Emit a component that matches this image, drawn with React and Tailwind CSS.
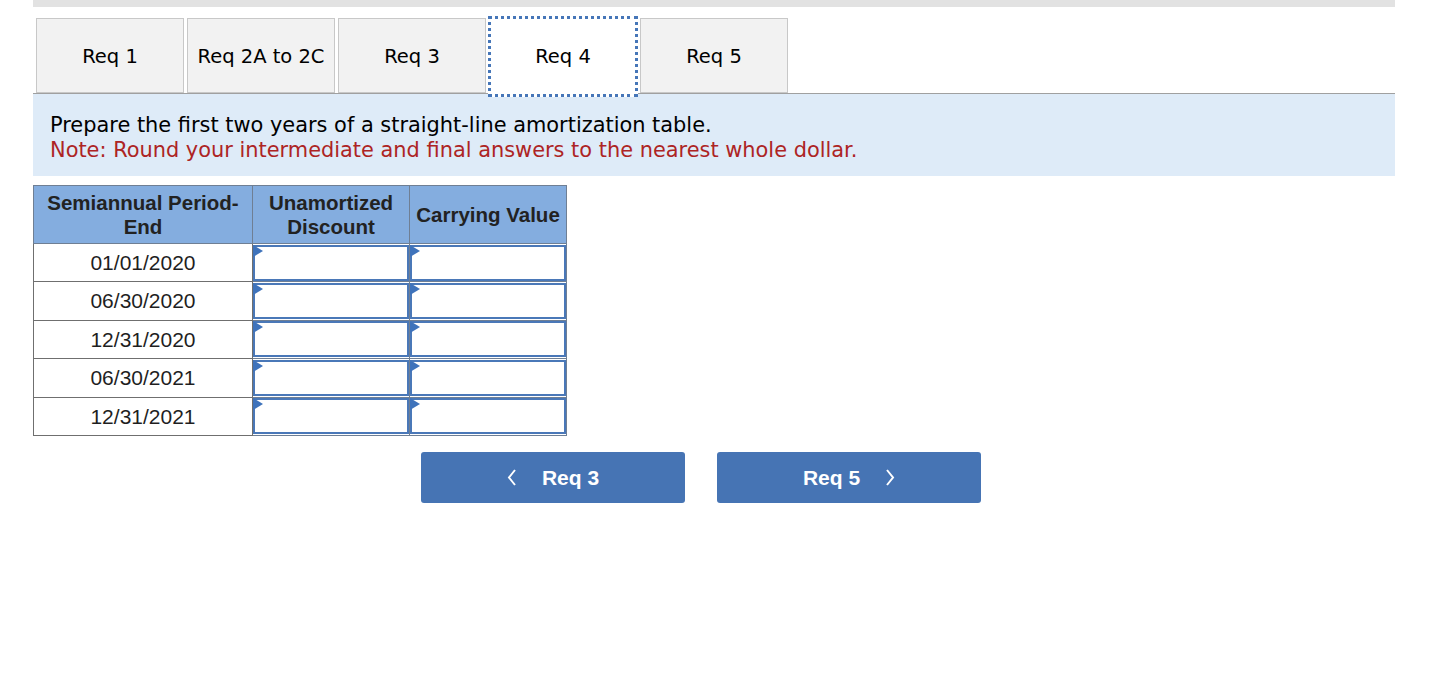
const tabs = ['Req 1', 'Req 2A to 2C', 'Req 3', 'Req 4', 'Req 5'];
const dates = ['01/01/2020', '06/30/2020', '12/31/2020', '06/30/2021', '12/31/2021'];

function InputCell() {
  return (
    <td className="p-0 border border-[#6f7f94] h-[38.4px]">
      <div className="relative h-[36px] border-2 border-[#4a78b8] bg-white">
        <svg className="absolute -left-[2px] -top-[2px]" width="10" height="12" viewBox="0 0 10 12">
          <polygon points="0,0 10,6 0,12" fill="#3f73bb" />
        </svg>
      </div>
    </td>
  );
}

function Chevron({ dir }) {
  return (
    <svg width="10" height="17" viewBox="0 0 10 17" fill="none" stroke="white" strokeWidth="2">
      {dir === 'left' ? <polyline points="8,1 2,8.5 8,16" /> : <polyline points="2,1 8,8.5 2,16" />}
    </svg>
  );
}

export default function App() {
  return (
    <div className="w-[1432px] h-[674px] bg-white overflow-hidden">
      <div className="ml-[33px] w-[1362px]">
        <div className="h-[7px] bg-[#e2e2e2]" />

        {/* tabs */}
        <div className="mt-[11px] flex items-start gap-[3px] pl-[3px] h-[75px] relative z-10 font-['DejaVu_Sans',sans-serif] text-[19.5px] text-black">
          {tabs.map(t => (
            t === 'Req 4' ? (
              <div key={t} className="w-[150px] h-[81px] -mt-[2px] -mx-[1px] border-[3px] border-dotted border-[#4676b8] bg-white flex items-center justify-center">
                <span>{t}</span>
              </div>
            ) : (
              <div key={t} className="w-[148px] h-[75px] pt-[2px] border border-[#c8c8c8] bg-[#f2f2f2] flex items-center justify-center">
                {t}
              </div>
            )
          ))}
        </div>

        {/* instructions */}
        <div className="border-t border-[#a0a0a0] bg-[#deebf8] h-[83px] pl-[17px] pt-[19px] font-['DejaVu_Sans',sans-serif] text-[20.9px] leading-[25px]">
          <div className="text-black">Prepare the first two years of a straight-line amortization table.</div>
          <div className="text-[#ad2424]">Note: Round your intermediate and final answers to the nearest whole dollar.</div>
        </div>

        {/* table */}
        <table className="mt-[9px] border-collapse font-['Liberation_Sans',Arial,sans-serif] text-[21px] text-[#1f1f1f]">
          <thead>
            <tr className="bg-[#84addf] font-bold h-[58px] leading-[24px] text-[20.5px] text-[#222]">
              <th className="w-[219px] border border-[#6f7f94] font-bold">Semiannual Period-<br />End</th>
              <th className="w-[157px] border border-[#6f7f94] font-bold">Unamortized<br />Discount</th>
              <th className="w-[157px] border border-[#6f7f94] font-bold">Carrying Value</th>
            </tr>
          </thead>
          <tbody>
            {dates.map(d => (
              <tr key={d}>
                <td className="border border-[#6f6f6f] text-center h-[38.4px]">{d}</td>
                <InputCell />
                <InputCell />
              </tr>
            ))}
          </tbody>
        </table>

        {/* nav buttons */}
        <div className="mt-[16px] ml-[388px] flex gap-[32px] font-['Liberation_Sans',Arial,sans-serif] font-bold text-[21px] text-white">
          <button className="w-[264px] h-[51px] rounded-[3px] bg-[#4674b4] flex items-center justify-center gap-[25px]">
            <Chevron dir="left" />
            <span>Req 3</span>
          </button>
          <button className="w-[264px] h-[51px] rounded-[3px] bg-[#4674b4] flex items-center justify-center gap-[25px]">
            <span>Req 5</span>
            <Chevron dir="right" />
          </button>
        </div>
      </div>
    </div>
  );
}
